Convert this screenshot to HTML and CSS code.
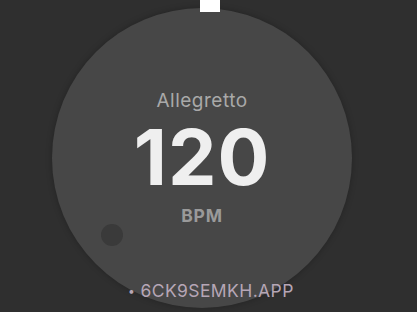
FILE: index.html
```html
<!DOCTYPE html>
<html lang="en">
<head>
    <meta charset="UTF-8">
    <meta name="viewport" content="width=device-width, initial-scale=1.0">
    <title>Metronome</title>
    <link rel="stylesheet" href="styles.css">
</head>
<body>
    <div class="dial-wrap">
        <div class="dial">
            <div class="tempo-name">Allegretto</div>
            <div class="bpm-value">120</div>
            <div class="bpm-label">BPM</div>
            <div class="beat-dot"></div>
        </div>
        <div class="top-marker"></div>
        <div class="app-id"><span class="bullet">•</span> 6CK9SEMKH.APP</div>
    </div>
</body>
</html>
```

FILE: styles.css
```css
body {
    background-color: #2f2f2f;
    margin: 0;
    font-family: Inter, "Noto Sans", sans-serif;
    height: 312px;
    overflow: hidden;
}
.dial-wrap {
    position: relative;
    padding: 8px 0 0 52px;
}
.dial {
    position: relative;
    width: 300px;
    height: 300px;
    border-radius: 50%;
    background-color: #474747;
    box-shadow: 0 0 6px rgba(0, 0, 0, 0.25);
    display: flex;
    flex-direction: column;
    align-items: center;
}
.tempo-name {
    margin-top: 83px;
    font-size: 19px;
    color: #a9a9a9;
    line-height: 20px;
    letter-spacing: 0.5px;
}
.bpm-value {
    margin-top: 8px;
    font-size: 77px;
    font-weight: 700;
    color: #efefef;
    line-height: 76px;
    letter-spacing: 1px;
}
.bpm-label {
    margin-top: 11px;
    font-size: 17.5px;
    font-weight: 700;
    color: #9a9a9a;
    line-height: 20px;
    letter-spacing: 0.8px;
}
.beat-dot {
    position: absolute;
    left: 49px;
    top: 216px;
    width: 22px;
    height: 22px;
    border-radius: 50%;
    background-color: #3a3a3a;
}
.top-marker {
    position: absolute;
    top: 0;
    left: 200px;
    width: 20px;
    height: 12px;
    background-color: #ffffff;
}
.app-id {
    position: absolute;
    top: 280px;
    left: 128px;
    font-size: 17.5px;
    color: #b6a6b6;
    line-height: 22px;
    letter-spacing: 0.4px;
}
.bullet {
    font-size: 12px;
    vertical-align: 2px;
}
```
